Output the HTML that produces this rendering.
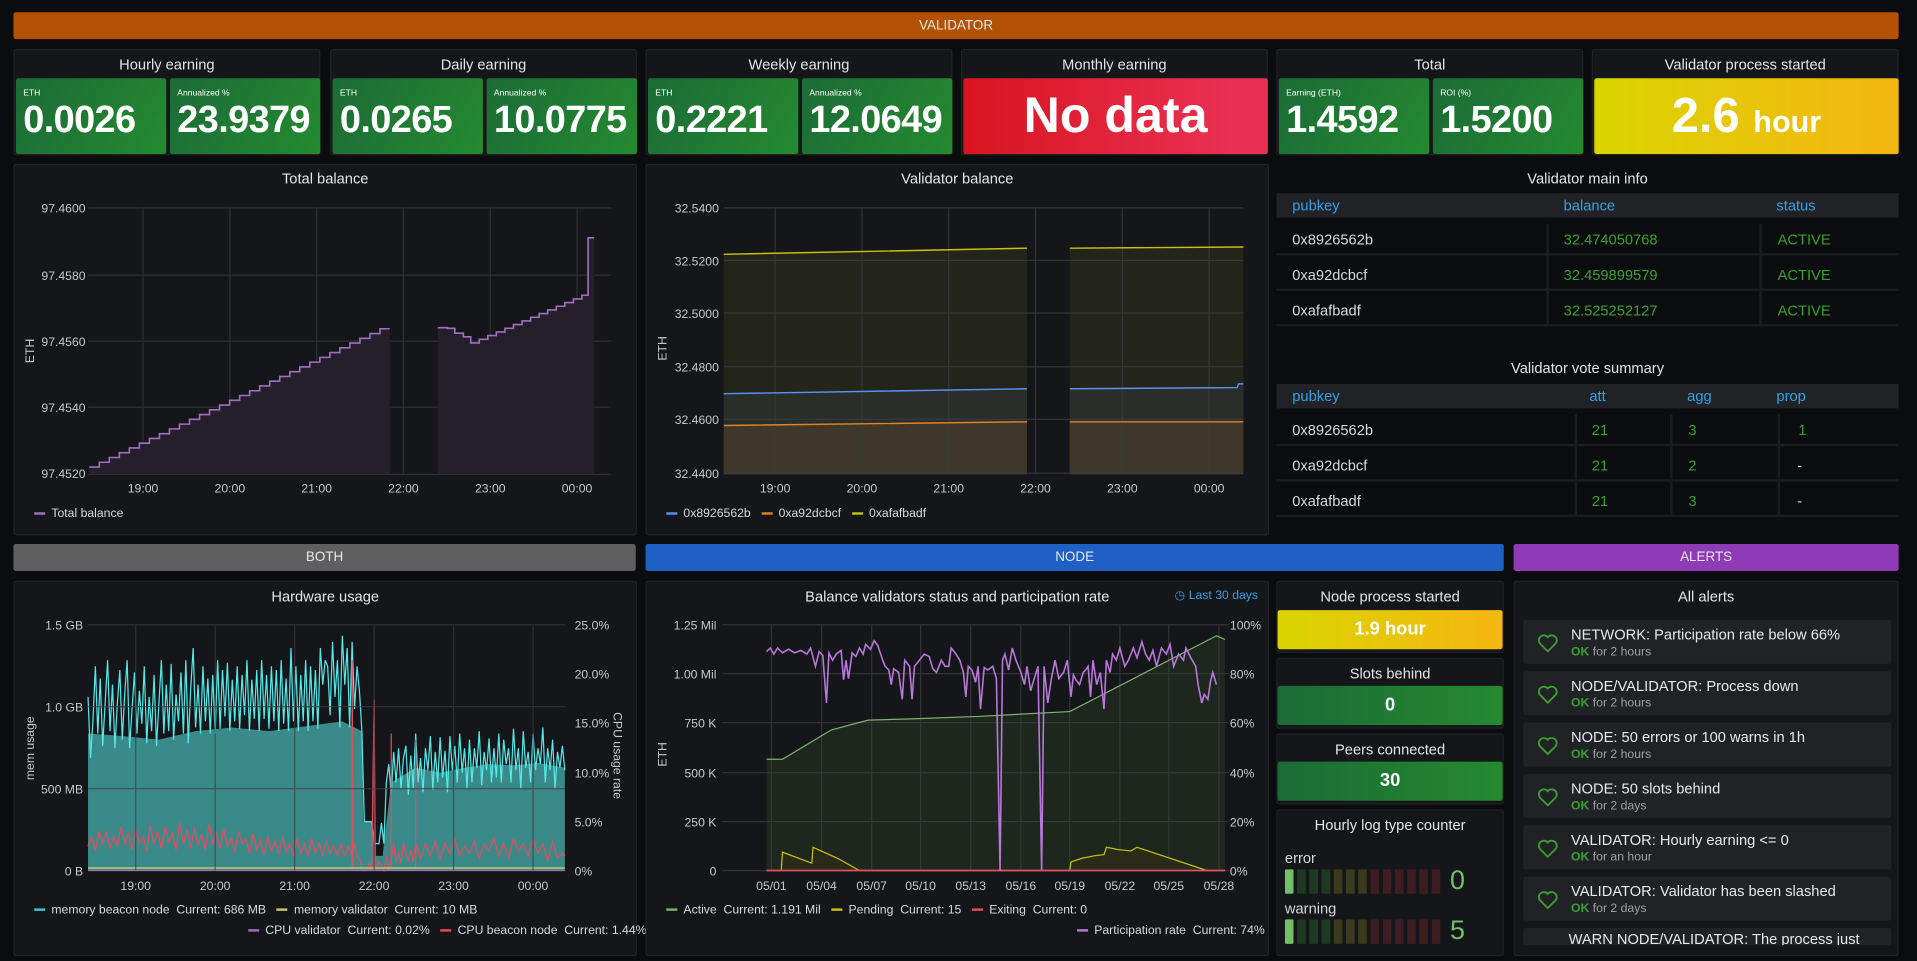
<!DOCTYPE html>
<html><head><meta charset="utf-8"><style>
*{box-sizing:border-box;margin:0;padding:0}
html,body{width:1917px;height:961px;overflow:hidden;background:#0b0c0e}
#w{position:absolute;left:0;top:0;width:1568px;height:786px;transform:scale(1.22258,1.2226);transform-origin:0 0;font-family:"Liberation Sans",sans-serif;color:#d8d9da}
.a{position:absolute}
.p{position:absolute;background:#141619;border:1px solid #202226;border-radius:2px}
.t{position:absolute;left:0;right:0;text-align:center;font-size:12px;color:#e4e5e6}
.bar{position:absolute;height:22px;border-radius:2px;text-align:center;font-size:11px;line-height:22px;color:#e8e8e8}
.g{position:absolute;top:23px;height:62px;border-radius:2px;background:linear-gradient(120deg,#1b6b36,#248a2f);color:#fff}
.g .l{position:absolute;left:6px;top:9px;font-size:7px}
.g .v{position:absolute;left:6px;top:16px;font-size:31px;font-weight:bold;letter-spacing:-0.5px}
.hd{position:absolute;background:#202226;height:20px;left:1044px;width:509px}
.hd span{position:absolute;top:3px;color:#33a2e5;font-size:12px}
.row{position:absolute;left:1044px;width:509px;height:28px;border-bottom:2px solid #1b1c20;font-size:12px}
.row span{position:absolute;top:8px}
.gr{color:#3aa02f}
.sep{position:absolute;width:2px;background:#1b1c20}
.ax{font-size:10px;fill:#c7c8ca;font-family:"Liberation Sans",sans-serif}
.lg{position:absolute;font-size:10px;color:#d8d9da;white-space:nowrap}
.lg i{display:inline-block;width:9px;height:2px;vertical-align:middle;margin-right:5px;margin-left:6px}
.al{position:absolute;left:7px;width:301px;height:36px;background:#202226;border-radius:2px}
.al b{position:absolute;left:39px;top:5px;font-size:12px;color:#e8e8e8;font-weight:normal}
.al s{position:absolute;left:39px;top:21px;font-size:10px;color:#9fa0a3;text-decoration:none}
.al s em{font-style:normal;color:#3aa02f;font-weight:bold}
.al svg{position:absolute;left:11px;top:10px}
</style></head><body><div id="w">

<div class="bar" style="left:11px;top:10px;width:1542px;background:#b25103;">VALIDATOR</div>

<div class="p" style="left:11px;top:40px;width:251px;height:87px"><div class="t" style="top:5px">Hourly earning</div>
<div class="g" style="left:1px;width:123px"><div class="l">ETH</div><div class="v">0.0026</div></div>
<div class="g" style="left:127px;width:123px"><div class="l">Annualized %</div><div class="v">23.9379</div></div></div>
<div class="p" style="left:270px;top:40px;width:251px;height:87px"><div class="t" style="top:5px">Daily earning</div>
<div class="g" style="left:1px;width:123px"><div class="l">ETH</div><div class="v">0.0265</div></div>
<div class="g" style="left:127px;width:123px"><div class="l">Annualized %</div><div class="v">10.0775</div></div></div>
<div class="p" style="left:528px;top:40px;width:251px;height:87px"><div class="t" style="top:5px">Weekly earning</div>
<div class="g" style="left:1px;width:123px"><div class="l">ETH</div><div class="v">0.2221</div></div>
<div class="g" style="left:127px;width:123px"><div class="l">Annualized %</div><div class="v">12.0649</div></div></div>
<div class="p" style="left:786px;top:40px;width:251px;height:87px"><div class="t" style="top:5px">Monthly earning</div>
<div class="a" style="left:1px;top:23px;width:249px;height:62px;border-radius:2px;background:linear-gradient(90deg,#d8151f,#ea3154 90%);color:#fff;text-align:center;font-weight:bold;font-size:41px;line-height:60px">No data</div></div>
<div class="p" style="left:1044px;top:40px;width:251px;height:87px"><div class="t" style="top:5px">Total</div>
<div class="g" style="left:1px;width:123px"><div class="l">Earning (ETH)</div><div class="v">1.4592</div></div>
<div class="g" style="left:127px;width:123px"><div class="l">ROI (%)</div><div class="v">1.5200</div></div></div>
<div class="p" style="left:1302px;top:40px;width:251px;height:87px"><div class="t" style="top:5px">Validator process started</div>
<div class="a" style="left:1px;top:23px;width:249px;height:62px;border-radius:2px;background:linear-gradient(90deg,#d9d400,#f5b713);color:#fff;text-align:center;font-weight:bold;font-size:40px;line-height:62px">2.6 <span style="font-size:25px">hour</span></div></div>

<div class="p" style="left:11px;top:134px;width:510px;height:304px"><div class="t" style="top:4px">Total balance</div></div>
<svg class="a" style="left:0;top:0" width="1568" height="786">
<g stroke="#2f3034" stroke-width="1">
<line x1="72" y1="170" x2="500" y2="170"/><line x1="72" y1="225" x2="500" y2="225"/><line x1="72" y1="279" x2="500" y2="279"/><line x1="72" y1="333" x2="500" y2="333"/><line x1="72" y1="388" x2="500" y2="388"/>
<line x1="117" y1="170" x2="117" y2="388"/><line x1="188" y1="170" x2="188" y2="388"/><line x1="259" y1="170" x2="259" y2="388"/><line x1="330" y1="170" x2="330" y2="388"/><line x1="401" y1="170" x2="401" y2="388"/><line x1="472" y1="170" x2="472" y2="388"/>
</g>
<path d="M73 382 h8.2 v-3.9 h8.2 v-3.9 h8.2 v-3.9 h8.2 v-3.9 h8.2 v-3.9 h8.2 v-3.9 h8.2 v-3.9 h8.2 v-3.9 h8.2 v-3.9 h8.2 v-3.9 h8.2 v-3.9 h8.2 v-3.9 h8.2 v-3.9 h8.2 v-3.9 h8.2 v-3.9 h8.2 v-3.9 h8.2 v-3.9 h8.2 v-3.9 h8.2 v-3.9 h8.2 v-3.9 h8.2 v-3.9 h8.2 v-3.9 h8.2 v-3.9 h8.2 v-3.9 h8.2 v-3.9 h8.2 v-3.9 h8.2 v-3.9 h8.2 v-3.9 h8.2 v-3.9 h8 V388 H73Z" fill="#251f2c" stroke="none"/>
<path d="M73 382 h8.2 v-3.9 h8.2 v-3.9 h8.2 v-3.9 h8.2 v-3.9 h8.2 v-3.9 h8.2 v-3.9 h8.2 v-3.9 h8.2 v-3.9 h8.2 v-3.9 h8.2 v-3.9 h8.2 v-3.9 h8.2 v-3.9 h8.2 v-3.9 h8.2 v-3.9 h8.2 v-3.9 h8.2 v-3.9 h8.2 v-3.9 h8.2 v-3.9 h8.2 v-3.9 h8.2 v-3.9 h8.2 v-3.9 h8.2 v-3.9 h8.2 v-3.9 h8.2 v-3.9 h8.2 v-3.9 h8.2 v-3.9 h8.2 v-3.9 h8.2 v-3.9 h8.2 v-3.9 h8" fill="none" stroke="#a16fc0" stroke-width="1.3"/>
<path d="M358 268 h8 v0.5 h6 v4 h7 v3 h6 v5 h7 v-3 h7 v-3 h7 v-3 h7 v-3 h7 v-3 h7 v-3 h7 v-3 h7 v-3 h7 v-3 h7 v-3 h7 v-3 h7 v-3 h7 v-3 h5 v-47 h5 V388 H358Z" fill="#251f2c"/>
<path d="M358 268 h8 v0.5 h6 v4 h7 v3 h6 v5 h7 v-3 h7 v-3 h7 v-3 h7 v-3 h7 v-3 h7 v-3 h7 v-3 h7 v-3 h7 v-3 h7 v-3 h7 v-3 h7 v-3 h7 v-3 h5 v-47 h5" fill="none" stroke="#a16fc0" stroke-width="1.3"/>
<g class="ax" text-anchor="end"><text x="70" y="174">97.4600</text><text x="70" y="229">97.4580</text><text x="70" y="283">97.4560</text><text x="70" y="337">97.4540</text><text x="70" y="391">97.4520</text></g>
<text class="ax" transform="translate(28,287) rotate(-90)" text-anchor="middle">ETH</text>
<g class="ax" text-anchor="middle"><text x="117" y="403">19:00</text><text x="188" y="403">20:00</text><text x="259" y="403">21:00</text><text x="330" y="403">22:00</text><text x="401" y="403">23:00</text><text x="472" y="403">00:00</text></g>
</svg>
<div class="lg" style="left:22px;top:415px"><i style="background:#a16fc0"></i>Total balance</div>

<div class="p" style="left:528px;top:134px;width:510px;height:304px"><div class="t" style="top:4px">Validator balance</div></div>
<svg class="a" style="left:0;top:0" width="1568" height="786">
<path d="M592 208 L840 203 V388 H592Z M875 203 L1017 202 V388 H875Z" fill="#23241a"/>
<path d="M592 322 L840 318 V388 H592Z M875 318 L1012 317 L1017 314 V388 H875Z" fill="#2a2e2b"/>
<path d="M592 348 L840 345 V388 H592Z M875 345 L1017 345 V388 H875Z" fill="#3f372a"/>
<g stroke="#3a3b3e" stroke-width="1" opacity="0.8">
<line x1="592" y1="170" x2="1017" y2="170"/><line x1="592" y1="213" x2="1017" y2="213"/><line x1="592" y1="256" x2="1017" y2="256"/><line x1="592" y1="300" x2="1017" y2="300"/><line x1="592" y1="343" x2="1017" y2="343"/><line x1="592" y1="387" x2="1017" y2="387"/>
<line x1="634" y1="170" x2="634" y2="388"/><line x1="705" y1="170" x2="705" y2="388"/><line x1="776" y1="170" x2="776" y2="388"/><line x1="847" y1="170" x2="847" y2="388"/><line x1="918" y1="170" x2="918" y2="388"/><line x1="989" y1="170" x2="989" y2="388"/>
</g>
<path d="M592 208 L840 203 M875 203 L1017 202" stroke="#c8c10f" stroke-width="1.2" fill="none"/>
<path d="M592 322 L840 318 M875 318 L1012 317 L1013 314 L1017 314" stroke="#5794f2" stroke-width="1.2" fill="none"/>
<path d="M592 348 L840 345 M875 345 L1017 345" stroke="#e0822a" stroke-width="1.2" fill="none"/>
<g class="ax" text-anchor="end"><text x="588" y="174">32.5400</text><text x="588" y="217">32.5200</text><text x="588" y="260">32.5000</text><text x="588" y="304">32.4800</text><text x="588" y="347">32.4600</text><text x="588" y="391">32.4400</text></g>
<text class="ax" transform="translate(545,285) rotate(-90)" text-anchor="middle">ETH</text>
<g class="ax" text-anchor="middle"><text x="634" y="403">19:00</text><text x="705" y="403">20:00</text><text x="776" y="403">21:00</text><text x="847" y="403">22:00</text><text x="918" y="403">23:00</text><text x="989" y="403">00:00</text></g>
</svg>
<div class="lg" style="left:539px;top:415px"><i style="background:#5794f2"></i>0x8926562b <i style="background:#e0822a"></i>0xa92dcbcf <i style="background:#c8c10f"></i>0xafafbadf</div>

<div class="t" style="left:1044px;width:509px;top:139px">Validator main info</div>
<div class="hd" style="top:158px"><span style="left:13px">pubkey</span><span style="left:235px">balance</span><span style="left:409px">status</span></div>
<div class="row" style="top:181px"><span style="left:13px">0x8926562b</span><span class="gr" style="left:235px">32.474050768</span><span class="gr" style="left:410px">ACTIVE</span></div>
<div class="row" style="top:210px"><span style="left:13px">0xa92dcbcf</span><span class="gr" style="left:235px">32.459899579</span><span class="gr" style="left:410px">ACTIVE</span></div>
<div class="row" style="top:239px"><span style="left:13px">0xafafbadf</span><span class="gr" style="left:235px">32.525252127</span><span class="gr" style="left:410px">ACTIVE</span></div>
<div class="sep" style="left:1265px;top:183px;height:83px"></div><div class="sep" style="left:1439px;top:183px;height:83px"></div>
<div class="t" style="left:1044px;width:509px;top:294px">Validator vote summary</div>
<div class="hd" style="top:314px"><span style="left:13px">pubkey</span><span style="left:256px">att</span><span style="left:336px">agg</span><span style="left:409px">prop</span></div>
<div class="row" style="top:337px"><span style="left:13px">0x8926562b</span><span class="gr" style="left:258px">21</span><span class="gr" style="left:337px">3</span><span class="gr" style="left:427px">1</span></div>
<div class="row" style="top:366px"><span style="left:13px">0xa92dcbcf</span><span class="gr" style="left:258px">21</span><span class="gr" style="left:337px">2</span><span style="left:426px">-</span></div>
<div class="row" style="top:395px"><span style="left:13px">0xafafbadf</span><span class="gr" style="left:258px">21</span><span class="gr" style="left:337px">3</span><span style="left:426px">-</span></div>
<div class="sep" style="left:1288px;top:339px;height:83px"></div><div class="sep" style="left:1366px;top:339px;height:83px"></div><div class="sep" style="left:1454px;top:339px;height:83px"></div>

<div class="bar" style="left:11px;top:445px;width:509px;background:#5f5f5f">BOTH</div>
<div class="bar" style="left:528px;top:445px;width:702px;background:#1f60c4">NODE</div>
<div class="bar" style="left:1238px;top:445px;width:315px;background:#8f3bb8">ALERTS</div>

<div class="p" style="left:11px;top:475px;width:510px;height:307px"><div class="t" style="top:5px">Hardware usage</div></div>
<svg class="a" style="left:0;top:0" width="1568" height="786">
<path d="M72 600 L100 602 L130 605 L160 598 L190 595 L220 598 L250 594 L280 590 L296 598 L297 672 L305 672 L306 700 L313 700 L314 690 L320 640 L340 628 L360 632 L380 628 L400 625 L420 626 L440 624 L462 628 L462 712 L72 712Z" fill="#3a8a8a"/>
<polyline fill="none" stroke="#54e8e8" stroke-width="1" points="72,570 74,620 76,590 78,545 80,600 82,555 84,610 86,575 88,540 90,598 92,560 94,612 96,575 98,548 100,605 102,568 104,540 106,612 108,580 110,550 112,600 114,565 116,592 118,545 120,608 122,570 124,598 126,552 128,610 130,575 132,540 134,600 136,560 138,598 140,543 142,605 144,568 146,590 148,550 150,600 152,540 154,608 156,563 158,530 160,595 162,560 164,600 166,545 168,590 170,555 172,600 174,552 176,600 178,540 180,596 182,548 184,586 186,542 188,598 190,556 192,590 194,545 196,596 198,552 200,585 202,540 204,598 206,556 208,588 210,548 212,598 214,540 216,588 218,552 220,596 222,545 224,590 226,548 228,598 230,540 232,592 234,555 236,598 238,530 240,590 242,545 244,598 246,552 248,590 250,540 252,598 254,545 256,590 258,548 260,596 262,530 264,560 266,540 268,545 270,585 272,525 274,570 276,540 278,595 280,520 282,560 284,530 286,595 288,525 290,580 292,545 294,565 296,598 298,672 304,672 306,690 310,690 312,673 314,690 316,640 318,625 320,650 322,615 324,640 326,612 328,645 330,620 332,610 334,650 336,618 338,645 340,600 342,640 344,620 346,648 348,612 350,630 352,602 354,646 356,615 358,640 360,603 362,636 364,614 366,648 368,602 370,630 372,610 374,640 376,600 378,632 380,612 382,645 384,605 386,640 388,612 390,628 392,598 394,642 396,615 398,630 400,604 402,640 404,612 406,636 408,600 410,640 412,605 414,625 416,612 418,640 420,596 422,630 424,612 426,645 428,598 430,628 432,615 434,640 436,600 438,630 440,612 442,625 444,595 446,640 448,612 450,630 452,605 454,645 456,615 458,628 460,610 462,630"/>
<polyline fill="none" stroke="#e34c5f" stroke-width="1" points="72,692 75,684 78,696 81,680 84,690 87,680 90,694 93,684 96,692 99,676 102,690 105,682 108,695 111,678 114,690 117,684 120,696 123,675 126,690 129,680 132,694 135,676 138,689 141,682 144,695 147,673 150,690 153,679 156,694 159,677 162,691 165,683 168,695 171,674 174,690 177,681 180,694 183,678 186,692 189,685 192,697 195,680 198,690 201,686 204,698 207,682 210,695 213,687 216,699 219,684 222,696 225,688 228,699 231,684 234,697 237,690 240,700 243,686 246,698 249,690 252,700 255,686 258,698 261,690 264,700 267,688 270,698 273,692 276,700 279,690 282,700 285,692 288,700 290,690 292,700 295,704 296,712 300,712 302,706 304,712 306,573 307,712 310,705 314,712 316,700 318,712 320,702 322,690 324,705 326,698 328,706 330,690 334,705 336,695 338,705 340,690 344,702 348,690 352,700 356,688 360,702 364,690 368,698 372,686 376,700 380,692 384,698 388,688 392,702 396,690 400,696 404,686 408,700 412,690 416,702 420,686 424,696 428,690 432,700 436,686 440,698 444,690 448,704 452,688 456,702 460,698 462,700"/>
<path d="M288 710 L288 540 L289 710 M306 710 L306 572 M320 710 L320 600 M340 710 L340 605" stroke="#e34c5f" stroke-width="1"/>
<path d="M72 710 H462" stroke="#c8c86a" stroke-width="1.2"/>
<path d="M72 712 H462" stroke="#a16fc0" stroke-width="1"/>
<g stroke="#3a3b3e" stroke-width="1" opacity="0.7">
<line x1="72" y1="511" x2="462" y2="511"/><line x1="72" y1="578" x2="462" y2="578"/><line x1="72" y1="645" x2="462" y2="645"/>
<line x1="111" y1="511" x2="111" y2="712"/><line x1="176" y1="511" x2="176" y2="712"/><line x1="241" y1="511" x2="241" y2="712"/><line x1="306" y1="511" x2="306" y2="712"/><line x1="371" y1="511" x2="371" y2="712"/><line x1="436" y1="511" x2="436" y2="712"/>
</g>
<g class="ax" text-anchor="end"><text x="68" y="515">1.5 GB</text><text x="68" y="582">1.0 GB</text><text x="68" y="649">500 MB</text><text x="68" y="716">0 B</text></g>
<g class="ax"><text x="470" y="515">25.0%</text><text x="470" y="555">20.0%</text><text x="470" y="595">15.0%</text><text x="470" y="636">10.0%</text><text x="470" y="676">5.0%</text><text x="470" y="716">0%</text></g>
<text class="ax" transform="translate(28,612) rotate(-90)" text-anchor="middle">mem usage</text>
<text class="ax" transform="translate(502,618) rotate(90)" text-anchor="middle">CPU usage rate</text>
<g class="ax" text-anchor="middle"><text x="111" y="728">19:00</text><text x="176" y="728">20:00</text><text x="241" y="728">21:00</text><text x="306" y="728">22:00</text><text x="371" y="728">23:00</text><text x="436" y="728">00:00</text></g>
</svg>
<div class="lg" style="left:22px;top:739px"><i style="background:#3fc8c8"></i>memory beacon node&nbsp; Current: 686 MB <i style="background:#c8c86a"></i>memory validator&nbsp; Current: 10 MB</div>
<div class="lg" style="left:197px;top:756px"><i style="background:#a16fc0"></i>CPU validator&nbsp; Current: 0.02% <i style="background:#e34c5f"></i>CPU beacon node&nbsp; Current: 1.44%</div>

<div class="p" style="left:528px;top:475px;width:510px;height:307px"><div class="t" style="top:5px">Balance validators status and participation rate</div>
<div class="a" style="right:8px;top:6px;font-size:10px;color:#33a2e5">&#9719; Last 30 days</div></div>
<svg class="a" style="left:0;top:0" width="1568" height="786">
<path d="M627 712 V621 L640 621 L680 597 L710 589 L745 588 L800 586 L875 582 L995 520 L1002 523 V712Z" fill="#1d271e"/>
<g stroke="#3a3b3e" stroke-width="1" opacity="0.8">
<line x1="591" y1="511" x2="1005" y2="511"/><line x1="591" y1="551" x2="1005" y2="551"/><line x1="591" y1="591" x2="1005" y2="591"/><line x1="591" y1="632" x2="1005" y2="632"/><line x1="591" y1="672" x2="1005" y2="672"/><line x1="591" y1="712" x2="1005" y2="712"/>
<line x1="631" y1="511" x2="631" y2="712"/><line x1="672" y1="511" x2="672" y2="712"/><line x1="713" y1="511" x2="713" y2="712"/><line x1="753" y1="511" x2="753" y2="712"/><line x1="794" y1="511" x2="794" y2="712"/><line x1="835" y1="511" x2="835" y2="712"/><line x1="875" y1="511" x2="875" y2="712"/><line x1="916" y1="511" x2="916" y2="712"/><line x1="956" y1="511" x2="956" y2="712"/><line x1="997" y1="511" x2="997" y2="712"/>
</g>
<polyline fill="none" stroke="#7eb26d" stroke-width="1" points="627,621 640,621 680,597 710,589 745,588 800,586 875,582 995,520 1002,523"/>
<path d="M875 712 L876 705 L885 702 L895 700 L903 699 L905 693 L915 695 L925 696 L930 693 L987 712Z M639 712 L640 697 L664 706 L665 693 L685 702 L703 712Z" fill="#2a2a18"/>
<polyline fill="none" stroke="#c8c10f" stroke-width="1" points="627,712 639,712 640,697 664,706 665,693 685,702 703,712 875,712 876,705 885,702 895,700 903,699 905,693 915,695 925,696 930,693 987,712 1002,712"/>
<path d="M627 712 H1002" stroke="#e34c5f" stroke-width="1.5"/>
<polyline fill="none" stroke="#b877d9" stroke-width="1.3" points="627,533 630,530 633,535 636,530 640,534 645,531 650,534 655,532 660,535 663,530 667,545 670,533 673,536 676,575 678,534 681,540 684,535 688,532 690,556 692,540 694,555 697,534 700,537 703,530 706,535 708,527 712,531 715,524 718,528 722,540 724,545 727,548 729,560 731,547 735,550 738,572 740,540 744,545 746,572 748,545 752,540 756,535 760,537 763,547 766,550 770,540 773,545 776,545 778,530 782,535 785,540 788,550 790,570 792,545 795,548 798,558 800,545 802,580 805,546 808,548 812,545 815,555 818,712 820,540 822,535 825,548 828,530 831,540 835,550 838,560 840,545 843,565 846,555 849,545 852,712 854,545 857,575 860,555 863,540 866,555 870,550 873,540 876,570 878,552 880,556 883,560 886,550 888,548 890,545 892,570 894,540 897,560 900,550 903,580 905,540 908,550 910,535 913,540 916,530 920,545 923,540 927,530 930,538 934,525 937,535 940,540 943,532 946,545 950,530 954,535 957,527 960,545 964,535 968,540 970,530 974,538 978,545 980,560 983,575 985,568 988,572 990,558 992,550 995,560"/>
<g class="ax" text-anchor="end"><text x="586" y="515">1.25 Mil</text><text x="586" y="555">1.00 Mil</text><text x="586" y="595">750 K</text><text x="586" y="636">500 K</text><text x="586" y="676">250 K</text><text x="586" y="716">0</text></g>
<g class="ax"><text x="1006" y="515">100%</text><text x="1006" y="555">80%</text><text x="1006" y="595">60%</text><text x="1006" y="636">40%</text><text x="1006" y="676">20%</text><text x="1006" y="716">0%</text></g>
<text class="ax" transform="translate(545,617) rotate(-90)" text-anchor="middle">ETH</text>
<g class="ax" text-anchor="middle"><text x="631" y="728">05/01</text><text x="672" y="728">05/04</text><text x="713" y="728">05/07</text><text x="753" y="728">05/10</text><text x="794" y="728">05/13</text><text x="835" y="728">05/16</text><text x="875" y="728">05/19</text><text x="916" y="728">05/22</text><text x="956" y="728">05/25</text><text x="997" y="728">05/28</text></g>
</svg>
<div class="lg" style="left:539px;top:739px"><i style="background:#7eb26d"></i>Active&nbsp; Current: 1.191 Mil <i style="background:#c8c10f"></i>Pending&nbsp; Current: 15 <i style="background:#e34c5f"></i>Exiting&nbsp; Current: 0</div>
<div class="lg" style="left:875px;top:756px"><i style="background:#b877d9"></i>Participation rate&nbsp; Current: 74%</div>

<div class="p" style="left:1044px;top:475px;width:186px;height:59px"><div class="t" style="top:5px">Node process started</div>
<div class="a" style="left:0;top:23px;width:184px;height:32px;border-radius:2px;background:linear-gradient(90deg,#d9d400,#f5b713);color:#fff;text-align:center;font-weight:bold;font-size:15px;line-height:32px">1.9 hour</div></div>
<div class="p" style="left:1044px;top:538px;width:186px;height:58px"><div class="t" style="top:5px">Slots behind</div>
<div class="a" style="left:0;top:22px;width:184px;height:32px;border-radius:2px;background:linear-gradient(90deg,#1b6b36,#248a2f);color:#fff;text-align:center;font-weight:bold;font-size:15px;line-height:32px">0</div></div>
<div class="p" style="left:1044px;top:600px;width:186px;height:58px"><div class="t" style="top:5px">Peers connected</div>
<div class="a" style="left:0;top:22px;width:184px;height:32px;border-radius:2px;background:linear-gradient(90deg,#1b6b36,#248a2f);color:#fff;text-align:center;font-weight:bold;font-size:15px;line-height:32px">30</div></div>
<div class="p" style="left:1044px;top:662px;width:186px;height:120px"><div class="t" style="top:5px">Hourly log type counter</div>
<div class="a" style="left:6px;top:32px;font-size:12px">error</div>
<div class="a" style="left:6px;top:73px;font-size:12px">warning</div>
<svg class="a" style="left:6px;top:48px" width="180" height="70">
<g><rect x="0" y="0" width="7" height="20" rx="1" fill="#73bf69"/><rect x="10" y="0" width="7" height="20" fill="#1e3b22"/><rect x="20" y="0" width="7" height="20" fill="#1e3b22"/><rect x="30" y="0" width="7" height="20" fill="#1e3b22"/><rect x="40" y="0" width="7" height="20" fill="#3a3a1d"/><rect x="50" y="0" width="7" height="20" fill="#3a3a1d"/><rect x="60" y="0" width="7" height="20" fill="#3a3a1d"/><rect x="70" y="0" width="7" height="20" fill="#3e1d22"/><rect x="80" y="0" width="7" height="20" fill="#3e1d22"/><rect x="90" y="0" width="7" height="20" fill="#3e1d22"/><rect x="100" y="0" width="7" height="20" fill="#3e1d22"/><rect x="110" y="0" width="7" height="20" fill="#3e1d22"/><rect x="120" y="0" width="7" height="20" fill="#3e1d22"/></g>
<g transform="translate(0,41)"><rect x="0" y="0" width="7" height="20" rx="1" fill="#73bf69"/><rect x="10" y="0" width="7" height="20" fill="#1e3b22"/><rect x="20" y="0" width="7" height="20" fill="#1e3b22"/><rect x="30" y="0" width="7" height="20" fill="#1e3b22"/><rect x="40" y="0" width="7" height="20" fill="#3a3a1d"/><rect x="50" y="0" width="7" height="20" fill="#3a3a1d"/><rect x="60" y="0" width="7" height="20" fill="#3a3a1d"/><rect x="70" y="0" width="7" height="20" fill="#3e1d22"/><rect x="80" y="0" width="7" height="20" fill="#3e1d22"/><rect x="90" y="0" width="7" height="20" fill="#3e1d22"/><rect x="100" y="0" width="7" height="20" fill="#3e1d22"/><rect x="110" y="0" width="7" height="20" fill="#3e1d22"/><rect x="120" y="0" width="7" height="20" fill="#3e1d22"/></g>
</svg>
<div class="a" style="left:141px;top:44px;font-size:22px;color:#73bf69">0</div>
<div class="a" style="left:141px;top:85px;font-size:22px;color:#73bf69">5</div>
</div>

<div class="p" style="left:1238px;top:475px;width:315px;height:307px;overflow:hidden"><div class="t" style="top:5px">All alerts</div>
<div class="al" style="top:31px"><svg width="18" height="18" viewBox="0 0 24 24"><path d="M12 21 L3.5 12.5 A5 5 0 0 1 12 5.5 A5 5 0 0 1 20.5 12.5 Z" fill="none" stroke="#3aa02f" stroke-width="2"/></svg><b>NETWORK: Participation rate below 66%</b><s><em>OK</em> for 2 hours</s></div>
<div class="al" style="top:73px"><svg width="18" height="18" viewBox="0 0 24 24"><path d="M12 21 L3.5 12.5 A5 5 0 0 1 12 5.5 A5 5 0 0 1 20.5 12.5 Z" fill="none" stroke="#3aa02f" stroke-width="2"/></svg><b>NODE/VALIDATOR: Process down</b><s><em>OK</em> for 2 hours</s></div>
<div class="al" style="top:115px"><svg width="18" height="18" viewBox="0 0 24 24"><path d="M12 21 L3.5 12.5 A5 5 0 0 1 12 5.5 A5 5 0 0 1 20.5 12.5 Z" fill="none" stroke="#3aa02f" stroke-width="2"/></svg><b>NODE: 50 errors or 100 warns in 1h</b><s><em>OK</em> for 2 hours</s></div>
<div class="al" style="top:157px"><svg width="18" height="18" viewBox="0 0 24 24"><path d="M12 21 L3.5 12.5 A5 5 0 0 1 12 5.5 A5 5 0 0 1 20.5 12.5 Z" fill="none" stroke="#3aa02f" stroke-width="2"/></svg><b>NODE: 50 slots behind</b><s><em>OK</em> for 2 days</s></div>
<div class="al" style="top:199px"><svg width="18" height="18" viewBox="0 0 24 24"><path d="M12 21 L3.5 12.5 A5 5 0 0 1 12 5.5 A5 5 0 0 1 20.5 12.5 Z" fill="none" stroke="#3aa02f" stroke-width="2"/></svg><b>VALIDATOR: Hourly earning &lt;= 0</b><s><em>OK</em> for an hour</s></div>
<div class="al" style="top:241px"><svg width="18" height="18" viewBox="0 0 24 24"><path d="M12 21 L3.5 12.5 A5 5 0 0 1 12 5.5 A5 5 0 0 1 20.5 12.5 Z" fill="none" stroke="#3aa02f" stroke-width="2"/></svg><b>VALIDATOR: Validator has been slashed</b><s><em>OK</em> for 2 days</s></div>
<div class="a" style="left:7px;top:283px;width:301px;height:14px;background:#202226;overflow:hidden;border-radius:2px"><span style="position:absolute;left:37px;top:2px;font-size:12px;color:#e8e8e8;white-space:nowrap">WARN NODE/VALIDATOR: The process just</span></div>
</div>

</div></body></html>
